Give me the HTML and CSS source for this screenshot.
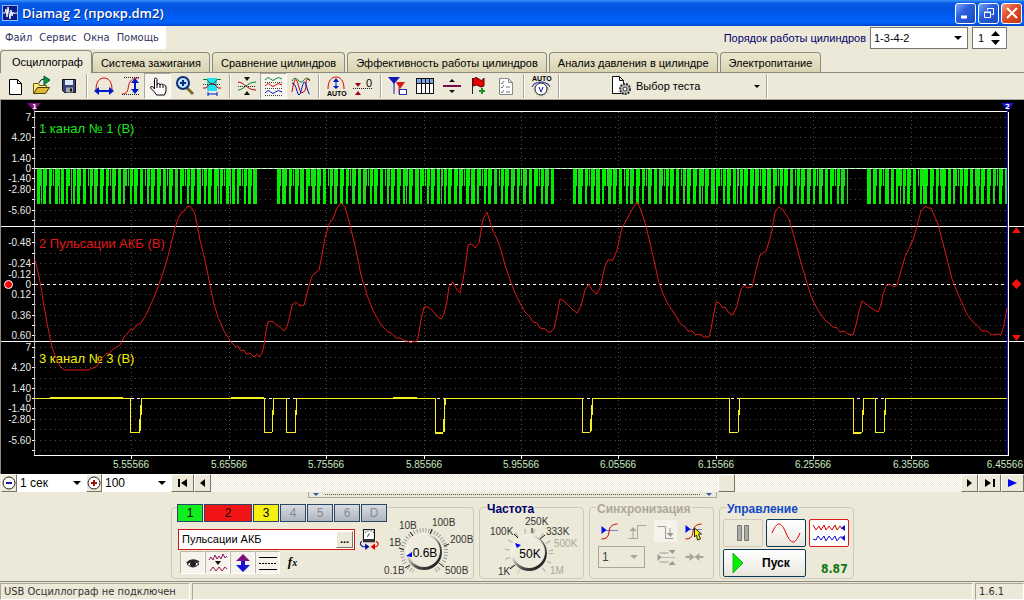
FILE: index.html
```html
<!DOCTYPE html>
<html lang="ru">
<head>
<meta charset="utf-8">
<title>Diamag 2 (прокр.dm2)</title>
<link rel="stylesheet" href="styles.css">
</head>
<body>
<header class="titlebar">
  <svg class="app-icon" width="16" height="16" viewBox="0 0 16 16"><rect width="16" height="16" fill="#0a1c8c"/><rect x=".5" y=".5" width="15" height="15" fill="none" stroke="#9db4e8"/><path d="M1 8h2l1-4 1 8 1-10 2 12 1-9 1 6 1-4 1 2 1-1h2" fill="none" stroke="#fff"/></svg>
  <h1 class="title">Diamag 2 (прокр.dm2)</h1>
  <div class="window-buttons">
    <button class="win" aria-label="Свернуть"><svg width="18" height="18" viewBox="0 0 18 18"><path d="M4 13h6" stroke="#fff" stroke-width="3"/></svg></button>
    <button class="win" aria-label="Восстановить"><svg width="18" height="18" viewBox="0 0 18 18" fill="none" stroke="#fff"><path d="M7.500 6.500v-2h6v6h-2M7 4.500h7M4.500 8.500h6v5h-6zM4 8h7"/></svg></button>
    <button class="win close" aria-label="Закрыть"><svg width="18" height="18" viewBox="0 0 18 18"><path d="M4 4l10 10M14 4L4 14" stroke="#fff" stroke-width="2"/></svg></button>
  </div>
</header>

<div class="menu-row">
  <nav class="menu">
    <a href="#">Файл</a><a href="#">Сервис</a><a href="#">Окна</a><a href="#">Помощь</a>
  </nav>
  <div class="order">
    <label for="order">Порядок работы цилиндров</label>
    <span class="select order-select"><select id="order"><option>1-3-4-2</option></select></span>
    <span class="spin"><input type="number" value="1" aria-label="Номер цилиндра"><svg width="9" height="14" viewBox="0 0 9 14"><path d="M0 5h9L4.500 0zM0 9h9l-4.500 5z"/></svg></span>
  </div>
</div>

<div class="tabs" role="tablist">
  <button class="tab active" role="tab" aria-selected="true">Осциллограф</button>
  <button class="tab" role="tab">Система зажигания</button>
  <button class="tab" role="tab">Сравнение цилиндров</button>
  <button class="tab" role="tab">Эффективность работы цилиндров</button>
  <button class="tab" role="tab">Анализ давления в цилиндре</button>
  <button class="tab" role="tab">Электропитание</button>
</div>

<div class="toolbar">
  <button class="tool" aria-label="Новый"><svg viewBox="0 0 22 22"><path d="M5.500 4.500h8l4 4v11h-12zM13.500 4.500v4h4" fill="#fff" stroke="#000"/></svg></button>
  <button class="tool" aria-label="Открыть"><svg viewBox="0 0 22 22"><path d="M2.500 18.500v-10h5l1 2h7v2" fill="#ffe98a" stroke="#6b5a00"/><path d="M2.500 18.500l4-6h12l-4 6z" fill="#e0b53a" stroke="#4d3f00"/><path d="M13 1l6 4-6 5z" fill="#0a9a2a" stroke="#055"/><path d="M8 8q1-4 5-4" fill="none" stroke="#222"/></svg></button>
  <button class="tool" aria-label="Сохранить"><svg viewBox="0 0 22 22"><path d="M4.500 4.500h13v13h-11l-2-2z" fill="#36447c" stroke="#111"/><path d="M7 5h8v5H7z" fill="#dfe6f5"/><path d="M8 12.500h7v5H8z" fill="#aaa"/><path d="M12 13.500h2v3h-2z" fill="#111"/></svg></button>
  <i class="sep"></i>
  <button class="tool" aria-label="Растянуть по времени"><svg viewBox="0 0 22 22" fill="none"><path d="M3 15C3 6 7 3 11 3s8 3 8 12" stroke="#e00000"/><path d="M4 16h14" stroke="#0018c8" stroke-width="2"/><path d="M1 16l5-4v8zM21 16l-5-4v8z" fill="#0018c8"/></svg></button>
  <button class="tool" aria-label="Растянуть по амплитуде"><svg viewBox="0 0 22 22" fill="none"><path d="M2 19c8 0 5-8 8-12 2-3 4-4 9-4" stroke="#e00000"/><path d="M4 2.500h16M2 19.500h18" stroke="#222" stroke-dasharray="1 1"/><path d="M15 6v10" stroke="#0018c8" stroke-width="2"/><path d="M15 3l4 5h-8zM15 19l4-5h-8z" fill="#0018c8"/></svg></button>
  <button class="tool pressed" aria-label="Рука"><svg viewBox="0 0 22 22"><path d="M7.500 14V4.500q0-1.500 1-1.500t1.500 1.500V10q0-1.500 1.500-1.500T13 10q0-1 1.500-1t1.500 1.500q0-1 1.300-.6T19 12v4l-1.500 4h-8L7.500 17l-4-4q0-2 2-1.500z" fill="#fff" stroke="#000"/><path d="M10 10v3M13 10v3M16 11v2" stroke="#000"/></svg></button>
  <button class="tool" aria-label="Масштаб"><svg viewBox="0 0 22 22"><path d="M13 13l6 6" stroke="#7d6a2c" stroke-width="3"/><circle cx="9" cy="8" r="6" fill="#bfe0ff" stroke="#0c2d78" stroke-width="2"/><path d="M6 8h6M9 5v6" stroke="#0c2d78" stroke-width="2"/></svg></button>
  <button class="tool" aria-label="Область"><svg viewBox="0 0 22 22" fill="none"><path d="M6 3h10v13H6z" fill="#20e0f0"/><path d="M2 4.500h4q5 9 10 0h4" stroke="#078030"/><path d="M2 13h3q6-9 12 0h3" stroke="#c00000"/><path d="M2 9.500h18" stroke="#333" stroke-dasharray="1 1"/><path d="M7 19h9M7 17v4M16 17v4" stroke="#0018c8"/></svg></button>
  <i class="sep"></i>
  <button class="tool" aria-label="Совместить"><svg viewBox="0 0 22 22" fill="none"><path d="M2 7c6 0 9 8 18 8" stroke="#c00000"/><path d="M2 15c6 0 9-8 18-8" stroke="#078030"/><path d="M2 11.500h18" stroke="#222" stroke-dasharray="1 1"/><path d="M8 2h6l-3 4zM8 20h6l-3-4z" fill="#111"/></svg></button>
  <button class="tool pressed" aria-label="Разнести"><svg viewBox="0 0 22 22" fill="none"><path d="M2 5q3-4 5.500-1t5 0 6.500 0" stroke="#078030"/><path d="M2 11q3-4 5.500-1t5 0 6.500 0" stroke="#d00000"/><path d="M2 18q3-4 5.500-1t5 0 6.500 0" stroke="#0018c8"/><path d="M2 7.500h18M2 13.500h18M2 20.500h18" stroke="#444" stroke-dasharray="1 1"/></svg></button>
  <button class="tool" aria-label="Наложить"><svg viewBox="0 0 22 22" fill="none"><path d="M2 6q3-5 6-1t6 0 6 0" stroke="#078030"/><path d="M2 17Q5-3 8 9t5 8q3 0 3-8t4-3" stroke="#d00000"/><path d="M2 8q3 0 5 8t4 0 3-9 3 6 3 6" stroke="#0018c8"/></svg></button>
  <i class="sep"></i>
  <button class="tool" aria-label="Авто"><svg viewBox="0 0 22 22" fill="none"><path d="M3 14C3 5 7 2 11 2s8 3 8 12" stroke="#e00000"/><path d="M11 5v8" stroke="#0018c8"/><path d="M11 3l3 4H8zM11 14l3-3H8z" fill="#0018c8"/><text x="2" y="21" class="tiny">AUTO</text></svg></button>
  <button class="tool" aria-label="Ноль"><svg viewBox="0 0 22 22"><path d="M1 13.500h19" stroke="#222" stroke-dasharray="1 1"/><path d="M3 8h6l-3 4zM3 20h6l-3-4z" fill="#a00018"/><text x="14" y="12" class="zero">0</text></svg></button>
  <i class="sep"></i>
  <button class="tool" aria-label="Маркеры"><svg viewBox="0 0 22 22"><path d="M1 2h12L7 9z" fill="#1616b8"/><path d="M7 8v11" stroke="#1616b8"/><path d="M9 7h9l-5 7z" fill="#d81818"/><path d="M12 12v7" stroke="#d81818"/><rect x="12.500" y="14.500" width="7" height="5" fill="#fff" stroke="#22369c"/></svg></button>
  <button class="tool" aria-label="Таблица"><svg viewBox="0 0 22 22"><rect x="2.500" y="3.500" width="17" height="15" fill="#fff" stroke="#111"/><path d="M3 4h16v4H3z" fill="#7ca4e8"/><path d="M2 8.500h18M7.500 4v14M11.500 4v14M15.500 4v14" stroke="#111"/></svg></button>
  <button class="tool" aria-label="Центр"><svg viewBox="0 0 22 22"><path d="M2 11h18" stroke="#7a0a50" stroke-width="2"/><path d="M8 7h6l-3-3zM8 15h6l-3 3z" fill="#111"/></svg></button>
  <button class="tool" aria-label="Флаг"><svg viewBox="0 0 22 22"><path d="M4.500 3v16" stroke="#222"/><path d="M5 4q3-3 6 0t5-1v8q-3 2-5 0t-6 0z" fill="#e80000" stroke="#600"/><path d="M11 16h6M14 13v6" stroke="#12902c" stroke-width="2"/></svg></button>
  <button class="tool" aria-label="Список"><svg viewBox="0 0 22 22" fill="none"><path d="M4.500 3.500h9l4 4v12h-13zM13.500 3.500v4h4" fill="#fff" stroke="#888"/><path d="M6 8l1 1 2-3M6 12l1 1 2-3M6 17l1 1 2-3M11 12h4M11 17h4" stroke="#777"/></svg></button>
  <i class="sep"></i>
  <button class="tool" aria-label="Авторегулятор"><svg viewBox="0 0 22 22" fill="none"><text x="2" y="6" class="tiny">AUTO</text><path d="M4 9l-2 3M18 9l2 3M4 9q7-4 14 0" stroke="#1616b8"/><circle cx="11" cy="14" r="6" fill="#fff" stroke="#222"/><circle cx="11" cy="14" r="7" stroke="#777" stroke-dasharray="1 2"/><path d="M9 12l2 5 2-5" stroke="#1616b8"/></svg></button>
  <i class="sep"></i>
  <button class="test"><svg viewBox="0 0 22 22" fill="none"><path d="M2.500 1.500h7l4 4v13h-11zM9.500 1.500v4h4" fill="#fff" stroke="#111"/><circle cx="15" cy="14" r="5" fill="#bbb" stroke="#333" stroke-width="2" stroke-dasharray="2 1"/><circle cx="15" cy="14" r="2" fill="#fff" stroke="#333"/></svg><span>Выбор теста</span><i class="arrow"></i></button>
  <i class="sep"></i>
</div>

<main class="scope">
<svg class="plot" viewBox="0 100 1024 374" role="img" aria-label="Осциллограмма">
  <g stroke="#4c4c4c" stroke-dasharray="1 4" shape-rendering="crispEdges">
    <path d="M35 117.500H1007M35 127.500H1007M35 137.500H1007M35 148.500H1007M35 158.500H1007M35 178.500H1007M35 189.500H1007M35 199.500H1007M35 210.500H1007M35 220.500H1007"/>
    <path d="M35 232.500H1007M35 242.500H1007M35 253.500H1007M35 263.500H1007M35 274.500H1007M35 294.500H1007M35 304.500H1007M35 315.500H1007M35 325.500H1007M35 335.500H1007"/>
    <path d="M35 347.500H1007M35 357.500H1007M35 367.500H1007M35 378.500H1007M35 388.500H1007M35 408.500H1007M35 419.500H1007M35 429.500H1007M35 440.500H1007M35 450.500H1007"/>
    <path stroke-dasharray="1 3" d="M131.500 112V455M229.500 112V455M326.500 112V455M424.500 112V455M521.500 112V455M618.500 112V455M716.500 112V455M813.500 112V455M911.500 112V455"/>
  </g>
  <g stroke="#fff" shape-rendering="crispEdges">
    <path d="M34 111.500H1008M1 226.500H1024M1 341.500H1024M34 455.500H1009M1008.500 112V456"/>
    <path d="M32 117.500h3M32 127.500h3M32 137.500h3M32 148.500h3M32 158.500h3M32 168.500h3M32 178.500h3M32 189.500h3M32 199.500h3M32 210.500h3M32 220.500h3M32 232.500h3M32 242.500h3M32 253.500h3M32 263.500h3M32 274.500h3M32 284.500h3M32 294.500h3M32 304.500h3M32 315.500h3M32 325.500h3M32 335.500h3M32 347.500h3M32 357.500h3M32 367.500h3M32 378.500h3M32 388.500h3M32 398.500h3M32 408.500h3M32 419.500h3M32 429.500h3M32 440.500h3M32 450.500h3"/>
    <path d="M131.500 456v3M229.500 456v3M326.500 456v3M424.500 456v3M521.500 456v3M618.500 456v3M716.500 456v3M813.500 456v3M911.500 456v3"/>
  </g>
  <path d="M34.500 110V455" stroke="#c9b4d0" shape-rendering="crispEdges"/>
  <path d="M27 103h14l-7 8z" fill="#7a1080"/><path d="M1001 103h13l-6 8z" fill="#1414d0"/>
  <path d="M1007.500 111V455" stroke="#1414d0" shape-rendering="crispEdges"/>
  <text class="mark" x="32" y="109">1</text><text class="mark" x="1005" y="109">2</text>
  <g class="ylab">
    <text x="31" y="121">7</text><text x="31" y="141">4.20</text><text x="31" y="162">1.40</text><text x="31" y="172">0</text><text x="31" y="182">-1.40</text><text x="31" y="193">-2.80</text><text x="31" y="214">-5.60</text>
    <text x="31" y="246">-0.48</text><text x="31" y="267">-0.24</text><text x="31" y="278">-0.12</text><text x="31" y="288">0</text><text x="31" y="298">0.12</text><text x="31" y="319">0.36</text><text x="31" y="339">0.60</text>
    <text x="31" y="351">7</text><text x="31" y="371">4.20</text><text x="31" y="392">1.40</text><text x="31" y="402">0</text><text x="31" y="412">-1.40</text><text x="31" y="423">-2.80</text><text x="31" y="444">-5.60</text>
  </g>
  <g class="xlab">
    <text x="131" y="468">5.55566</text><text x="229" y="468">5.65566</text><text x="326" y="468">5.75566</text><text x="424" y="468">5.85566</text><text x="521" y="468">5.95566</text><text x="618" y="468">6.05566</text><text x="716" y="468">6.15566</text><text x="813" y="468">6.25566</text><text x="911" y="468">6.35566</text><text class="last" x="1023" y="468">6.45566</text>
  </g>
  <g class="chname">
    <text x="39" y="133" fill="#1fe01f">1 канал № 1 (В)</text>
    <text x="39" y="248" fill="#e01616">2 Пульсации АКБ (В)</text>
    <text x="39" y="363" fill="#f0f000">3 канал № 3 (В)</text>
  </g>
  <g stroke="#00f000" shape-rendering="crispEdges" fill="none">
    <path stroke-width="18" stroke-dasharray="4 2 4 2 3 1 1 1 4 2 3 2 4 1 1 1 3 1 4 2 3 2 1 1 3 1" d="M37 177H258M277 177H554M573 177H848M867 177H1007"/>
    <path stroke-width="18" stroke-dasharray="3 3 3 3 2 4 3 3 3 2 2 5 2 2 3 3 3 4 2 2" d="M37 195H258M277 195H554M573 195H848M867 195H1007"/>
    <path stroke="#55b055" stroke-width="36" stroke-dasharray="1 17 1 11 1 22" d="M41 186H258M282 186H554M578 186H848M870 186H1007"/>
    <path d="M35 168.500H1007" stroke="#8f8"/>
    <path d="M35 168.500H1007" stroke="#fff" stroke-dasharray="3 3"/>
    <path d="M35 284.500H1007M35 398.500H1007" stroke="#fff" stroke-dasharray="3 3"/>
  </g>
  <polyline class="red-trace" points="35,260 38,272 41,287 43,300 47,323 52,347 56,358 60,366 64,370 88,370 93,368 97,366 100,360 107,353 109,354 112,350 120,345 124,337 127,334 131,329 133,330 137,325 141,323 147,313 151,304 155,295 159,284 163,273 167,260 171,244 175,228 178,219 181,213 183,212 187,207 190,206 192,209 195,214 198,229 200,240 204,256 207,270 211,290 214,304 218,317 224,331 231,342 236,347 238,346 241,351 244,350 246,354 250,353 254,357 257,354 259,357 262,353 264,345 266,331 268,322 272,321 277,325 281,328 284,331 287,327 290,315 292,305 296,302 300,306 304,305 307,293 312,276 315,273 319,270 322,255 325,238 329,224 333,219 337,208 341,203 345,207 350,225 356,250 361,275 367,295 372,308 376,316 380,323 384,328 388,332 391,333 396,338 400,338 405,341 408,341 411,343 413,341 416,342 418,338 421,320 424,307 428,307 432,310 437,316 441,319 444,314 447,301 449,287 453,282 457,290 460,293 463,280 466,261 468,245 472,244 475,248 479,243 483,219 487,212 490,222 493,231 497,239 501,250 505,265 510,280 515,293 520,303 525,312 530,317 533,322 537,323 540,328 545,329 548,332 551,332 554,328 557,315 560,299 564,301 568,305 572,309 577,313 581,306 585,290 589,284 592,290 597,294 600,288 605,266 608,260 613,260 617,250 622,228 626,221 628,217 633,208 637,202 641,210 646,226 653,256 659,283 664,296 668,304 674,313 680,323 684,326 688,331 692,331 696,335 700,334 704,337 709,337 711,329 713,318 716,302 719,303 723,308 725,307 729,313 733,315 737,306 741,289 745,285 747,288 752,287 756,270 760,255 766,251 771,235 775,212 779,207 783,210 789,219 793,233 800,259 807,283 811,296 815,305 820,313 825,320 829,323 834,328 836,327 840,332 844,331 848,334 853,335 856,325 859,311 862,301 866,304 871,308 878,312 881,305 883,294 886,286 890,284 894,287 897,285 901,271 905,257 913,240 918,222 921,211 926,206 928,208 931,208 938,224 945,251 952,279 958,294 962,303 967,314 972,321 977,325 982,331 987,331 992,335 996,334 1001,335 1004,325 1007,308"/>
  <g class="yellow-trace">
    <path d="M35 398.500H130.500V432.500H139L141.500 398.500H264.500V432.500H272L273.500 398.500H286.500V432.500H295L296.500 398.500H435.500V432.500H443L445.500 398.500H582.500V432.500H590L592.500 398.500H729.500V432.500H738L739.500 398.500H853.500V432.500H862L863.500 398.500H875.500V432.500H884L885.500 398.500H1007"/>
    <path d="M50 397.500H123M231 397.500H264M393 397.500h24M141 399v16M140 415v16M273 399v16M272 415v16M296 399v16M295 415v18M444 399v33M592 399v16M591 415v16M739 399v16M738 415v17M863 399v16M862 415v16M885 399v16M884 415v17M131 432.500h9M435 433.500h8M853 433.500h8"/>
  </g>
  <circle cx="8.500" cy="284.500" r="4" fill="#f00" stroke="#fff"/>
  <path d="M1012 233h9l-4.500-6zM1012 335h9l-4.500 6zM1016.500 279l5 5-5 5-5-5z" fill="#f01010"/>
</svg>
</main>

<div class="timebar">
  <button class="step" aria-label="Уменьшить"><svg width="14" height="14" viewBox="0 0 14 14"><circle cx="7" cy="7" r="6" fill="#fff" stroke="#222"/><path d="M4 7h6" stroke="#1a1ab0" stroke-width="2"/></svg></button>
  <span class="select time-select"><select aria-label="Развёртка"><option>1 сек</option></select></span>
  <button class="step" aria-label="Увеличить"><svg width="14" height="14" viewBox="0 0 14 14"><circle cx="7" cy="7" r="6" fill="#fff" stroke="#222"/><path d="M4 7h6M7 4v6" stroke="#a01010" stroke-width="2"/></svg></button>
  <span class="select time-select"><select aria-label="Масштаб, %"><option>100</option></select></span>
  <button class="nav wide" aria-label="В начало"><svg width="12" height="8" viewBox="0 0 12 8"><path d="M1 0h2v8H1zM10 0v8L4 4z"/></svg></button>
  <button class="nav" aria-label="Назад"><svg width="5" height="8" viewBox="0 0 5 8"><path d="M5 0v8L0 4z"/></svg></button>
  <div class="track"><span class="thumb"></span></div>
  <button class="nav" aria-label="Вперёд"><svg width="5" height="8" viewBox="0 0 5 8"><path d="M0 0v8l5-4z"/></svg></button>
  <button class="nav wide" aria-label="В конец"><svg width="12" height="8" viewBox="0 0 12 8"><path d="M1 0v8l6-4zM9 0h2v8H9z"/></svg></button>
  <button class="nav wide" aria-label="Воспроизвести"><svg width="9" height="8" viewBox="0 0 9 8"><path d="M0 0v8l9-4z" fill="#0000f0"/></svg></button>
</div>

<div class="splitter"><i></i><b></b><i></i></div>

<section class="panels">
  <div class="group channel">
    <div class="channel-left">
      <div class="chan-buttons">
        <button class="ch green">1</button><button class="ch red">2</button><button class="ch yellow">3</button><button class="ch" disabled>4</button><button class="ch" disabled>5</button><button class="ch" disabled>6</button><button class="ch" disabled>D</button>
      </div>
      <div class="name-row">
        <div class="name-box"><input type="text" value="Пульсации АКБ" aria-label="Имя канала"><button class="dots" aria-label="Обзор">...</button></div>
        <button class="plain" aria-label="Датчик"><svg width="20" height="20" viewBox="0 0 20 20" fill="none"><rect x="4.500" y="1.500" width="10" height="9" fill="#fff" stroke="#111"/><path d="M4 10h11v3H4z" fill="#333"/><path d="M6 4h1M8 3h1M11 3h1M13 4h1M8 8l2-3" stroke="#555"/><path d="M3 12q-3 3 1 5h3" stroke="#001090"/><path d="M6 14l4 3-4 3z" fill="#001090"/><path d="M16 12q4 3 0 5h-2" stroke="#d00"/><path d="M15 14l-4 3 4 3z" fill="#d00"/></svg></button>
      </div>
      <div class="mini-row">
        <button class="mini on" aria-label="Видимость"><svg viewBox="0 0 22 22"><path d="M5 12q6-5 12 0-6 6-12 0z" fill="#fff" stroke="#222"/><circle cx="11" cy="12" r="3" fill="#222"/><path d="M5 11q5-5 12-1" fill="none" stroke="#222" stroke-width="2"/></svg></button>
        <button class="mini on" aria-label="Сигнал"><svg viewBox="0 0 22 22" fill="none"><path d="M2 8l2-3 2 3 2-5 2 4 2-3 2 3 2-5 2 4 2-2" stroke="#901060"/><path d="M8 9h6l-3 4z" fill="#111"/><path d="M3 19l3-4 3 4 3-4 3 4 3-4 2 2" stroke="#a01050"/></svg></button>
        <button class="mini on" aria-label="Инверсия"><svg viewBox="0 0 22 22"><path d="M11 2l7 7h-5v3H9V9H4z" fill="#7a107a"/><path d="M11 20l7-7h-5v-4H9v4H4z" fill="#1414d8"/></svg></button>
        <button class="mini on" aria-label="Линии"><svg viewBox="0 0 22 22"><path d="M2 5.500h18M2 17.500h18" stroke="#000"/><path d="M2 11.500h18" stroke="#000" stroke-dasharray="2 1"/></svg></button>
        <button class="mini fx">f<small>x</small></button>
      </div>
    </div>
    <svg class="knob" width="90" height="66" viewBox="384 512 90 66">
      <defs><linearGradient id="rim" x1="0" y1="0" x2="1" y2="1"><stop offset=".3" stop-color="#f4f2ea"/><stop offset=".6" stop-color="#555"/><stop offset="1" stop-color="#000"/></linearGradient></defs>
      <circle cx="425" cy="552" r="22" fill="none" stroke="#999" stroke-width="4" stroke-dasharray="1 2" pathLength="138"/>
      <path d="M404 568l10-8M446 568l-10-8" stroke="#ece9d8" stroke-width="4"/><path d="M410 577h30l-8-10h-14z" fill="#ece9d8"/>
      <circle cx="425" cy="552" r="18" fill="url(#rim)"/><circle cx="425" cy="551" r="16" fill="#edeade"/>
      <path d="M406 568l5-3M400 548l5 2M411 532l3 4M433 529l-2 5M450 544l-5 2M445 567l-5-4" stroke="#111"/>
      <path d="M407 556l6-4v5z" fill="#00e"/>
      <text class="value" x="426" y="557">0.6В</text>
      <g class="scale"><text x="385" y="574">0.1В</text><text x="390" y="546">1В</text><text x="400" y="529">10В</text><text x="433" y="526">100В</text><text x="451" y="543">200В</text><text x="446" y="574">500В</text></g>
    </svg>
  </div>

  <div class="group freq">
    <h2 class="caption navy">Частота</h2>
    <svg class="knob" width="102" height="62" viewBox="480 515 102 62">
      <circle cx="529" cy="552" r="22" fill="none" stroke="#aaa" stroke-width="5" stroke-dasharray="1 8" pathLength="138"/>
      <path d="M514 577h30l-8-10h-14z" fill="#ece9d8"/>
      <circle cx="529" cy="552" r="18" fill="url(#rim)"/><circle cx="529" cy="551" r="16" fill="#edeade"/>
      <path d="M510 568l5-4M514 533l4 4M532 527v5M545 534l-5 4" stroke="#111"/>
      <path d="M515 542l6 2-4 3z" fill="#00e"/>
      <text class="value" x="530" y="557">50K</text>
      <g class="scale"><text x="498" y="574">1K</text><text x="490" y="534">100K</text><text x="525" y="524">250K</text><text x="546" y="534">333K</text><text x="554" y="546" class="off">500K</text><text x="550" y="573" class="off">1M</text></g>
    </svg>
  </div>

  <div class="group sync">
    <h2 class="caption grey">Синхронизация</h2>
    <div class="sync-row">
      <button class="plain" aria-label="Уровень"><svg viewBox="0 0 22 22" fill="none"><path d="M3 19c8 0 7-6 8-10 1-3 4-5 8-5" stroke="#d00000"/><path d="M4 10.500h16" stroke="#0018c8" stroke-dasharray="1 1"/><path d="M3 6v8l5-4z" fill="#0010e0"/></svg></button>
      <button class="plain" disabled aria-label="По фронту"><svg viewBox="0 0 22 22" fill="none"><path d="M2 18.500h9v-13h9M6.500 18V9" stroke="#a8a698"/><path d="M3 11h7l-3.500-4z" fill="#a8a698"/></svg></button>
      <button class="plain pale" disabled aria-label="По спаду"><svg viewBox="0 0 22 22" fill="none"><path d="M3 6.500h8v12h8M15.500 8v7" stroke="#999"/><path d="M12 13h7l-3 4z" fill="#999"/></svg></button>
      <button class="plain" aria-label="Курсор"><svg viewBox="0 0 22 22" fill="none"><path d="M3 19c8 0 7-6 8-10 1-3 4-5 8-5" stroke="#d00000"/><path d="M4 9.500h16" stroke="#0018c8" stroke-dasharray="1 1"/><path d="M3 5v8l5-4z" fill="#0010e0"/><path d="M12 8l7 6h-3l2 5-3 1-1-5-2 2z" fill="#fff000" stroke="#222"/></svg></button>
    </div>
    <div class="sync-row">
      <span class="select sync-select"><select disabled aria-label="Канал синхронизации"><option>1</option></select></span>
      <button class="plain" disabled aria-label="Порог"><svg viewBox="0 0 22 22" fill="none"><path d="M4 7h9M4 16h9" stroke="#999"/><path d="M4 11.500h16" stroke="#888" stroke-dasharray="1 1"/><path d="M2 8v7l4-4zM13 4h7l-3 4zM13 19h7l-3-4z" fill="#999"/></svg></button>
      <button class="plain" disabled aria-label="Сжать"><svg viewBox="0 0 22 22"><path d="M2 10h4V7l5 4-5 4v-3H2zM20 10h-4V7l-5 4 5 4v-3h4z" fill="#a8a698"/></svg></button>
    </div>
  </div>

  <div class="group control">
    <h2 class="caption blue">Управление</h2>
    <div class="ctl-row">
      <button class="big flat" disabled aria-label="Пауза"><svg width="36" height="24" viewBox="0 0 36 24"><path d="M12.500 4.500h4v15h-4zM19.500 4.500h4v15h-4z" fill="#aaa" stroke="#777"/></svg></button>
      <button class="big" aria-label="Один цикл"><svg width="36" height="24" viewBox="0 0 36 24"><path d="M4 12C9 0 13 0 18 12s9 12 14 0" fill="none" stroke="#d00000"/></svg></button>
      <button class="big chosen" aria-label="Непрерывно"><svg width="36" height="24" viewBox="0 0 36 24" fill="none"><path d="M2 4l3 5 3-4 2 4 3-5 2 5 3-4 3 4 3-5 2 5 3-4 2 3" stroke="#d00000"/><path d="M2 18l3 1 2-4 3 4 3-4 2 5 3-5 3 4 3-4 2 5 3-4h2" stroke="#1010c8"/><path d="M34 4v6l-4-3zM34 14v6l-4-3z" fill="#1010c8"/></svg></button>
    </div>
    <div class="ctl-row">
      <button class="start"><svg width="12" height="20" viewBox="0 0 12 20"><path d="M1 0v20l10-10z" fill="#00f000" stroke="#3a3"/></svg><span>Пуск</span></button>
      <output class="volt">8.87</output>
    </div>
  </div>
</section>

<footer class="status">
  <span class="cell first">USB Осциллограф не подключен</span><span class="cell mid"></span><span class="cell last">1.6.1</span>
</footer>
</body>
</html>
```
FILE: styles.css
```css
* { box-sizing: border-box; }
body {
  margin: 0;
  min-height: 100vh;
  display: flex;
  flex-direction: column;
  background: #ece9d8;
  border-bottom: 2px solid #2f7be0;
  font: 11px/14px "Liberation Sans", Arial, sans-serif;
  color: #000;
}
button, input, select { font: inherit; color: inherit; margin: 0; padding: 0; border: 0; background: none; border-radius: 0; }
svg { display: block; }

.titlebar {
  display: flex; align-items: center; gap: 4px;
  height: 26px; padding: 0 2px;
  background: linear-gradient(#3d95ff 0, #0a5be6 3px, #0054e3 10px, #0260fa 19px, #0064ff 22px, #0047c8 26px);
}
.title { flex: 1; margin: 0; color: #fff; font: 600 13px/16px "Open Sans", sans-serif; text-shadow: 1px 1px 0 #0a2a80; }
.window-buttons { display: flex; gap: 2px; }
.win { width: 21px; height: 21px; display: grid; place-items: center; border: 1px solid #fff; border-radius: 3px; background: linear-gradient(135deg, #7fa6f4, #2a5fdc 40%, #1c49c4); }
.win.close { background: linear-gradient(135deg, #f0a084, #e0502c 40%, #c43810); }

.menu-row { display: flex; justify-content: space-between; height: 24px; padding-right: 17px; }
.menu { display: flex; align-items: center; gap: 7px; height: 23px; padding: 0 7px 0 5px; background: #fff; }
.menu a { color: #33335c; text-decoration: none; font: 11px/14px "DejaVu Sans Condensed", "DejaVu Sans", sans-serif; }
.order { display: flex; align-items: center; gap: 4px; color: #00006c; }
.select { position: relative; display: inline-flex; background: #fff; color: #000; }
.select select { appearance: none; width: 100%; padding: 0 16px 0 3px; outline: 0; }
.select::after { content: ""; position: absolute; right: 5px; top: 50%; margin-top: -2px; border: 4px solid transparent; border-top-color: #000; border-bottom: 0; pointer-events: none; }
.order-select { width: 98px; height: 22px; border: 1px solid #777; }
.spin { display: flex; align-items: center; width: 35px; height: 22px; padding: 0 6px 0 5px; border: 1px solid #777; background: #fff; color: #000; }
.spin input { width: 100%; appearance: textfield; outline: 0; }
.spin input::-webkit-inner-spin-button { display: none; }
.spin svg { flex: none; }

.tabs { display: flex; align-items: flex-end; gap: 2px; height: 23px; border-bottom: 1px solid #8c8a7c; }
.tab { height: 20px; padding: 0 8px; border: 1px solid #8c8a7c; border-bottom: 0; border-radius: 4px 4px 0 0; background: linear-gradient(#ece8d0, #d8d2b0); white-space: nowrap; }
.tab.active { height: 23px; margin: 0 -2px -1px 0; padding: 0 8px 1px 11px; background: #ece9d8; }

.toolbar { display: flex; align-items: center; height: 27px; padding-left: 1px; border-bottom: 1px solid #aca899; }
.tool { display: grid; place-items: center; width: 27px; height: 26px; }
.tool svg, .test svg { width: 22px; height: 22px; }
.pressed { border: 1px solid; border-color: #aca899 #fff #fff #aca899; background: #f7f5ee; }
.sep { width: 8px; height: 24px; background: linear-gradient(90deg, transparent 4px, #aca899 4px, #aca899 5px, #fff 5px, #fff 6px, transparent 6px); }
.tiny { font: bold 7px "Liberation Sans", Arial, sans-serif; fill: #000; }
.zero { font: 11px "Liberation Sans", Arial, sans-serif; fill: #000; }
.test { display: flex; align-items: center; gap: 4px; width: 200px; height: 26px; padding: 0 2px 0 48px; }
.arrow { margin-left: auto; border: 3px solid transparent; border-top-color: #000; border-bottom: 0; }

.scope { background: #000; box-shadow: inset 1px 0 #8c8a7c; }
.plot { width: 100%; height: auto; }
.ylab, .xlab { font: 10px "Liberation Sans", Arial, sans-serif; fill: #e8e8e8; text-anchor: end; }
.xlab { text-anchor: middle; fill: #c8e8c0; }
.xlab .last { text-anchor: end; }
.mark { font: bold 7px "DejaVu Sans", sans-serif; fill: #fff; }
.chname { font: 13px "Liberation Sans", Arial, sans-serif; }
.red-trace { fill: none; stroke: #dc1818; }
.yellow-trace { fill: none; stroke: #f6f01c; shape-rendering: crispEdges; }

.timebar { display: flex; height: 18px; padding-left: 1px; background: #ece9d8; font-size: 12px; }
.step { display: grid; place-items: center; width: 16px; }
.step, .nav, .thumb, .dots { border: 1px solid; border-color: #fff #77756a #77756a #fff; background: #ece9d8; }
.time-select { width: 69px; height: 18px; }
.nav { display: grid; place-items: center; width: 17px; }
.nav.wide { width: 23px; }
.track { flex: 1; display: flex; padding-left: 507px; background: repeating-conic-gradient(#fff 0 25%, #ece9d8 0 50%) 0 0 / 2px 2px; }
.thumb { width: 17px; }

.splitter { display: flex; align-items: center; width: 409px; height: 6px; margin: 0 0 0 308px; padding: 0 4px; gap: 6px; border: 1px solid #aaa898; border-top: 0; }
.splitter i { border: 3px solid transparent; border-top-color: #3558a0; border-bottom: 0; }
.splitter b { flex: 1; border-top: 1px dotted #555; }

.panels { flex: 1; display: flex; align-items: flex-start; gap: 5px; padding: 9px 0 2px 171px; border-bottom: 1px solid #8c8a7c; }
.group { height: 72px; border: 1px solid #cdcabb; border-radius: 4px; }
.channel { display: flex; width: 303px; }
.channel-left { width: 211px; padding-left: 5px; margin-top: -4px; }
.chan-buttons { display: flex; gap: 1px; width: 210px; background: #ece9d8; font-size: 12px; }
.ch { width: 26px; height: 18px; border: 1px solid #2c4668; background: linear-gradient(#d8dce2, #aeb4be); }
.ch:disabled { color: #858b96; }
.ch.red { width: 48px; background: #f01414; border: 1px dotted #200; outline: 1px solid #2c4668; outline-offset: -1px; }
.ch.green { background: #10ee20; }
.ch.yellow { background: #f4f010; }
.name-row { display: flex; align-items: center; gap: 3px; margin: 6px 0 1px 1px; }
.name-box { display: flex; width: 177px; height: 21px; padding: 1px; border: 1px solid #d01818; background: #fff; }
.name-box input { flex: 1; min-width: 0; padding-left: 2px; outline: 0; }
.dots { width: 17px; line-height: 8px; font-weight: bold; }
.mini-row { display: flex; margin-left: 3px; }
.mini { display: grid; place-items: center; width: 25px; height: 23px; }
.mini svg { width: 22px; height: 22px; }
.mini.on { border: 1px solid; border-color: #bab7a8 #fff #fff #bab7a8; background: #f5f3ec; }
.mini.fx { display: block; font: italic bold 13px/20px "Liberation Serif", serif; }
.mini.fx small { font-size: 10px; }
.knob { margin-top: 4px; }
.value { font: 12px "Liberation Sans", Arial, sans-serif; text-anchor: middle; }
.scale { font: 10px "Liberation Sans", Arial, sans-serif; fill: #333; }
.scale .off { fill: #aaa898; }

.caption { width: max-content; margin: -6px 0 0 6px; padding: 0 1px; background: #ece9d8; font: bold 12px/14px "Liberation Sans", Arial, sans-serif; }
.navy { color: #00006c; }
.grey { color: #aca899; }
.blue { color: #1048c8; }
.freq { width: 105px; }
.freq .knob { margin-top: 0; }
.sync { width: 125px; }
.sync-row { display: flex; align-items: center; gap: 5px; padding: 4px 0 0 8px; }
.plain svg { width: 23px; height: 22px; }
.pale { background: #f5f3ec; }
.sync-select { width: 47px; height: 22px; margin-right: 5px; border: 1px solid #aca899; background: none; font-size: 12px; }
.sync-select::after { border-top-color: #aca899; right: 6px; }
.sync-select select { opacity: 1; color: #444; }
.control { width: 135px; }
.ctl-row { display: flex; gap: 3px; padding: 3px 3px 0; }
.ctl-row + .ctl-row { padding-top: 2px; }
.big, .start { border: 1px solid #0c3858; border-radius: 2px; background: linear-gradient(#fff, #e8e6dc); }
.big { display: grid; place-items: center; width: 40px; height: 28px; }
.big.flat { border-color: #cdcabb; background: none; }
.big.chosen { border-color: #e01818; background: #fff; }
.start { display: flex; align-items: center; gap: 18px; width: 83px; height: 28px; padding-left: 8px; font-size: 12px; font-weight: bold; }
.volt { align-self: flex-end; margin-left: 12px; font: bold 12px/16px "DejaVu Sans Condensed", "DejaVu Sans", sans-serif; color: #107810; }

.status { display: flex; gap: 2px; height: 18px; padding-top: 1px; font: 11px/16px "DejaVu Sans Condensed", "DejaVu Sans", sans-serif; color: #333; }
.cell { padding-left: 3px; border: 1px solid; border-color: #aca899 #fff #fff #aca899; white-space: nowrap; }
.cell.first { width: 190px; }
.cell.mid { flex: 1; }
.cell.last { width: 49px; }
```
